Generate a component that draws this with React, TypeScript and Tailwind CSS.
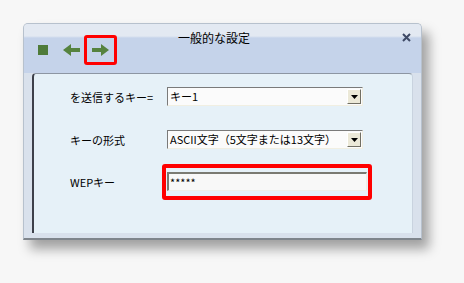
import { useState } from "react"

function Arrow({ dir }: { dir: "left" | "right" }) {
  return (
    <svg width="17" height="12" viewBox="0 0 17 12" className={dir === "left" ? "-scale-x-100" : ""}>
      <path d="M0 4 H9 V0 L17 6 L9 12 V8 H0 Z" fill="#56833f" />
    </svg>
  )
}

function Select({ value }: { value: string }) {
  return (
    <div className="flex h-[19px] w-[196px] items-stretch border-t border-l border-t-[#7a7a7a] border-l-[#7a7a7a] border-b border-r border-b-[#f1efe2] border-r-[#f1efe2] bg-[#fbfbfb]">
      <div className="flex-1 truncate pl-[2px] text-[11px] leading-[17px] text-black">{value}</div>
      <div className="m-[1px] flex w-[14px] items-center justify-center border border-t-[#ffffff] border-l-[#ffffff] border-b-[#716f64] border-r-[#716f64] bg-[#ece9d8]">
        <svg width="7" height="4" viewBox="0 0 7 4">
          <path d="M0 0 H7 L3.5 4 Z" fill="#000" />
        </svg>
      </div>
    </div>
  )
}

export default function App() {
  const [wep] = useState("*****")

  return (
    <div
      className="h-[283px] w-[464px] bg-[#f7f7f7] pt-[23px] pl-[23px]"
      style={{ fontFamily: '"Noto Sans CJK JP", "Noto Sans", sans-serif' }}
    >
      <div className="flex h-[217px] w-[399px] flex-col rounded-t-[5px] border border-[#b7c1cd] border-b-[#7f858c] border-b-2 bg-[#d9e1ec] shadow-[7px_9px_12px_rgba(0,0,0,0.35)]">
        {/* title bar */}
        <div className="flex h-[49px] items-start bg-[linear-gradient(#e3e9f2_0px,#e3e9f2_12px,#c5d3ea_14px,#c5d3ea_100%)] rounded-t-[4px]">
          <div className="mt-[11px] ml-[14px] flex items-center">
            <div className="h-[10px] w-[10px] bg-[#4f7b3a]" />
            <div className="ml-[15px]">
              <Arrow dir="left" />
            </div>
            <div className="ml-[4px] flex h-[30px] w-[33px] items-center justify-center rounded-[3px] border-[3px] border-[#ff0000]">
              <Arrow dir="right" />
            </div>
          </div>
          <div className="mt-[7px] ml-[61px] text-[12px] leading-[14px] text-black">一般的な設定</div>
          <div className="mt-[9px] mr-[10px] ml-auto">
            <svg width="9" height="9" viewBox="0 0 9 9">
              <path d="M1 1 L8 8 M8 1 L1 8" stroke="#3f4a66" strokeWidth="2" />
            </svg>
          </div>
        </div>

        {/* panel */}
        <div className="mx-[8px] mb-[5px] flex-1 rounded-t-[4px] border-t border-l-2 border-r border-t-[#8d96a3] border-l-[#3d404a] border-r-[#c9d3df] bg-[#e6f1f8] pt-[13px] pl-[36px]">
          <div className="flex items-center">
            <div className="w-[97px] text-[11px] leading-[14px] text-black">を送信するキー=</div>
            <Select value="キー1" />
          </div>
          <div className="mt-[24px] flex items-center">
            <div className="w-[97px] text-[11px] leading-[14px] text-black">キーの形式</div>
            <Select value="ASCII文字（5文字または13文字）" />
          </div>
          <div className="mt-[15px] flex items-center">
            <div className="w-[92px] text-[11px] leading-[14px] text-black">WEPキー</div>
            <div className="rounded-[3px] border-4 border-[#ff0000] px-[1px] pt-[4px] pb-[5px]">
              <div className="h-[19px] w-[200px] border-t-2 border-l-2 border-t-[#7a7a72] border-l-[#7a7a72] border-b border-r border-b-[#efeee6] border-r-[#efeee6] bg-[#f8f8f8] pl-[1px] text-[11px] leading-[16px] text-black">
                {wep}
              </div>
            </div>
          </div>
        </div>
      </div>
    </div>
  )
}
